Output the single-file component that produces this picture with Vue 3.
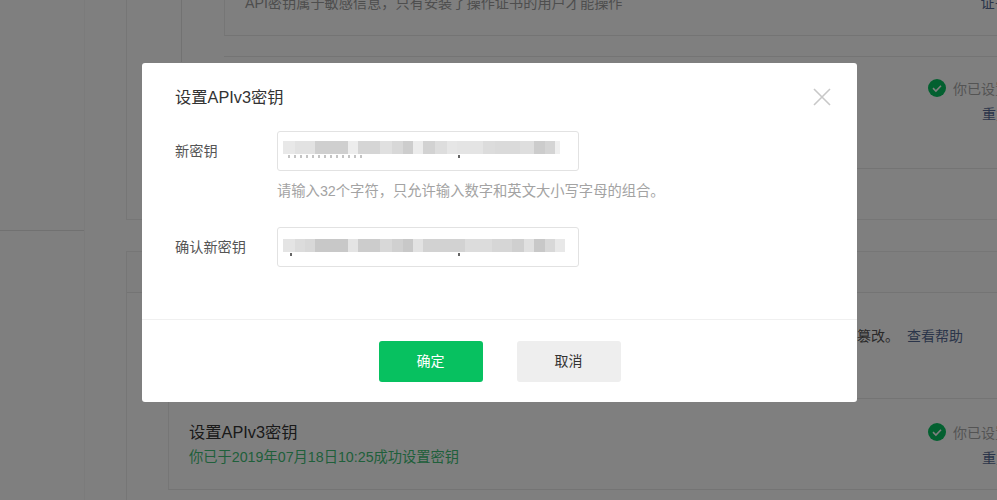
<script setup>
// 打码区域的色块，宽度和灰度照截图取
const keyBlocks = [
  [12, '#e8e8e8'], [20, '#e2e2e2'], [33, '#cfcfcf'], [10, '#ededed'], [22, '#d5d5d5'],
  [12, '#e0e0e0'], [11, '#d8d8d8'], [10, '#cdcdcd'], [10, '#ececec'], [12, '#d2d2d2'],
  [12, '#dddddd'], [10, '#e6e6e6'], [26, '#e4e4e4'], [12, '#dcdcdc'], [25, '#dadada'],
  [14, '#dedede'], [11, '#cccccc'], [10, '#d4d4d4'], [5, '#efefef'],
]
const confirmBlocks = [
  [12, '#e4e4e4'], [10, '#dcdcdc'], [10, '#d8d8d8'], [33, '#c8c8c8'], [10, '#e4e4e4'],
  [22, '#cccccc'], [12, '#d8d8d8'], [11, '#d0d0d0'], [10, '#c8c8c8'], [10, '#e2e2e2'],
  [42, '#d2d2d2'], [27, '#dcdcdc'], [20, '#d6d6d6'], [12, '#cfcfcf'], [10, '#e0e0e0'],
  [11, '#c8c8c8'], [10, '#d8d8d8'], [10, '#e8e8e8'],
]

const blockStyle = (b) => ({ width: b[0] + 'px', background: b[1] })
</script>

<template>
  <div class="page">
    <aside class="sidebar">
      <div class="side-line"></div>
    </aside>

    <main class="main">
      <section class="cert-section">
        <div class="cert-inner">
          <div class="notice">
            <span>API密钥属于敏感信息，只有安装了操作证书的用户才能操作</span>
            <a class="link notice-link">证书</a>
          </div>
          <div class="key-card">
            <div class="status">
              <svg class="check" viewBox="0 0 18 18">
                <circle cx="9" cy="9" r="9" fill="#07c160" />
                <path d="M5 9.2l2.9 2.8L13 6.8" fill="none" stroke="#fff" stroke-width="1.6" />
              </svg>
              <span class="status-text">你已设置</span>
            </div>
            <a class="link reset">重置密钥</a>
          </div>
        </div>
      </section>

      <section class="v3-section">
        <div class="v3-head"></div>
        <div class="v3-desc">
          <span>为保证接口数据的安全，平台使用密钥对回调报文加密，防止被篡改。</span>
          <a class="link help">查看帮助</a>
        </div>
        <div class="v3-card">
          <div class="v3-info">
            <div class="v3-title">设置APIv3密钥</div>
            <div class="v3-time">你已于2019年07月18日10:25成功设置密钥</div>
          </div>
          <div class="v3-side">
            <div class="status">
              <svg class="check" viewBox="0 0 18 18">
                <circle cx="9" cy="9" r="9" fill="#07c160" />
                <path d="M5 9.2l2.9 2.8L13 6.8" fill="none" stroke="#fff" stroke-width="1.6" />
              </svg>
              <span class="status-text">你已设置</span>
            </div>
            <a class="link reset">重置密钥</a>
          </div>
        </div>
      </section>
    </main>

    <div class="mask">
      <div class="dialog">
        <div class="dialog-body">
          <div class="dialog-head">
            <h3>设置APIv3密钥</h3>
            <svg class="close" viewBox="0 0 18 18">
              <path d="M1 1l16 16M17 1L1 17" fill="none" stroke="#c8c8c8" stroke-width="1.6" />
            </svg>
          </div>

          <div class="field">
            <label>新密钥</label>
            <div class="field-main">
              <div class="input">
                <div class="mosaic">
                  <i v-for="(b, i) in keyBlocks" :key="i" :style="blockStyle(b)"></i>
                </div>
                <div class="marks">
                  <span class="mark-run"></span>
                  <span class="mark-dot dot-a"></span>
                </div>
              </div>
              <p class="hint">请输入32个字符，只允许输入数字和英文大小写字母的组合。</p>
            </div>
          </div>

          <div class="field field-confirm">
            <label>确认新密钥</label>
            <div class="field-main">
              <div class="input">
                <div class="mosaic">
                  <i v-for="(b, i) in confirmBlocks" :key="i" :style="blockStyle(b)"></i>
                </div>
                <div class="marks">
                  <span class="mark-dot dot-b"></span>
                  <span class="mark-dot dot-c"></span>
                </div>
              </div>
            </div>
          </div>
        </div>

        <div class="dialog-foot">
          <button class="btn btn-primary" type="button">确定</button>
          <button class="btn" type="button">取消</button>
        </div>
      </div>
    </div>
  </div>
</template>

<style>
html,
body {
  margin: 0;
  overflow: hidden;
}
</style>

<style scoped>
.page {
  display: flex;
  width: 997px;
  height: 500px;
  overflow: hidden;
  background: #fff;
  font-family: "Liberation Sans", "Noto Sans CJK SC", sans-serif;
  font-size: 14px;
  color: #353535;
}

/* 背景页面 */
.sidebar {
  flex: none;
  width: 84px;
  border-right: 1px solid #f6f6f6;
}

.side-line {
  margin-top: 230px;
  border-top: 1px solid #e2e2e2;
}

.main {
  flex: none;
  width: 912px;
  padding-left: 41px;
  box-sizing: border-box;
}

.cert-section {
  height: 220px;
  padding-left: 54px;
  box-sizing: border-box;
  border-left: 1px solid #ececec;
  border-bottom: 1px solid #ececec;
}

.cert-inner {
  height: 62px;
  padding-left: 42px;
  border-left: 1px solid #e4e4e4;
}

.notice {
  display: flex;
  width: 800px;
  height: 36px;
  padding-left: 20px;
  box-sizing: border-box;
  border-left: 1px solid #ececec;
  border-bottom: 1px solid #e8e8e8;
  font-size: 14.2px;
  color: #9c9c9c;
  line-height: 7px;
  white-space: nowrap;
}

.notice-link {
  margin-left: 358px;
}

.key-card {
  width: 800px;
  height: 113px;
  margin-top: 20px;
  padding: 21px 0 0 704px;
  box-sizing: border-box;
  border-top: 1px solid #e8e8e8;
  border-bottom: 1px solid #e8e8e8;
}

.status {
  display: flex;
  align-items: center;
  gap: 7px;
  white-space: nowrap;
}

.check {
  flex: none;
  width: 18px;
  height: 18px;
}

.status-text {
  color: #a8a8a8;
}

.link {
  color: #576b95;
}

.reset {
  display: block;
  margin: 5px 0 0 54px;
  white-space: nowrap;
}

.v3-section {
  margin-top: 31px;
  height: 260px;
  border-left: 1px solid #ececec;
}

.v3-head {
  height: 40px;
  background: #fdfdfd;
  border-top: 1px solid #ececec;
  border-bottom: 1px solid #e8e8e8;
}

.v3-desc {
  display: flex;
  justify-content: flex-end;
  width: 836px;
  height: 105px;
  padding-top: 33px;
  box-sizing: border-box;
  line-height: 20px;
  white-space: nowrap;
  color: #555;
}

.help {
  margin-left: 8px;
}

.v3-card {
  display: flex;
  justify-content: space-between;
  width: 850px;
  height: 92px;
  margin-left: 41px;
  box-sizing: border-box;
  border-top: 1px solid #e8e8e8;
  border-left: 1px solid #ececec;
  border-bottom: 1px solid #e8e8e8;
}

.v3-info {
  padding: 23px 0 0 20px;
}

.v3-title {
  font-size: 16.3px;
  line-height: 20px;
  color: #353535;
}

.v3-time {
  margin-top: 5px;
  font-size: 14.25px;
  line-height: 20px;
  color: #3fc076;
}

.v3-side {
  flex: none;
  width: 90px;
  padding-top: 23px;
}

/* 弹窗 */
.mask {
  position: fixed;
  inset: 0;
  background: rgba(0, 0, 0, 0.5);
}

.dialog {
  position: absolute;
  left: 142px;
  top: 63px;
  width: 715px;
  height: 339px;
  background: #fff;
  border-radius: 3px;
}

.dialog-body {
  height: 257px;
  padding: 0 26px 0 33px;
  box-sizing: border-box;
  border-bottom: 1px solid #f0f0f0;
}

.dialog-head {
  display: flex;
  justify-content: space-between;
  align-items: center;
  height: 68px;
}

.dialog-head h3 {
  margin: 0 0 2px;
  font-size: 16.3px;
  font-weight: 400;
  color: #333;
}

.close {
  width: 18px;
  height: 18px;
}

.field {
  display: flex;
  color: #555;
}

.field-confirm {
  margin-top: 26px;
}

.field label {
  flex: none;
  width: 102px;
  line-height: 41px;
  font-size: 14.2px;
}

.input {
  width: 302px;
  height: 40px;
  padding: 9px 0 0 5px;
  box-sizing: border-box;
  border: 1px solid #e2e2e2;
  border-radius: 3px;
}

.mosaic {
  display: flex;
  height: 13px;
  filter: blur(0.6px);
}

.field-confirm .mosaic {
  margin-top: 2px;
}

.mosaic i {
  display: block;
  flex: none;
}

/* 打码下方露出的一点字迹 */
.marks {
  display: flex;
  height: 3px;
  margin-top: 1px;
}

.mark-run {
  width: 77px;
  margin-left: 5px;
  background: repeating-linear-gradient(90deg, #c4c4c4 0 2px, transparent 2px 6px);
}

.mark-dot {
  width: 2px;
  background: #666;
}

.dot-a {
  margin-left: 93px;
}

.dot-b {
  margin-left: 7px;
}

.dot-c {
  margin-left: 166px;
}

.hint {
  margin: 10px 0 0;
  font-size: 14.3px;
  line-height: 20px;
  color: #a3a3a3;
  white-space: nowrap;
}

.dialog-foot {
  display: flex;
  justify-content: center;
  gap: 34px;
  padding-top: 21px;
}

.btn {
  width: 104px;
  height: 41px;
  padding: 0 0 3px;
  border: 0;
  border-radius: 3px;
  background: #eeeeee;
  color: #333;
  font: inherit;
}

.btn-primary {
  background: #07c160;
  color: #fff;
}
</style>
